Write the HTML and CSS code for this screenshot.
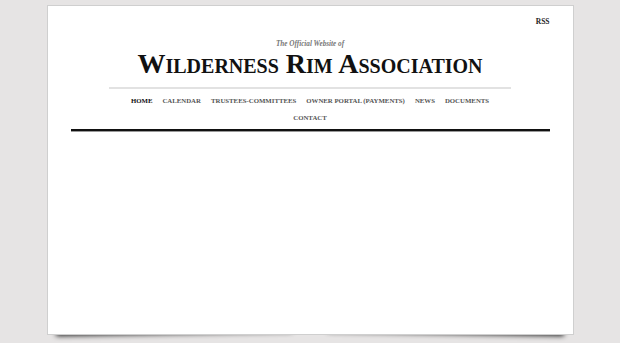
FILE: index.html
```html
<!DOCTYPE html>
<html>
<head>
<meta charset="utf-8">
<link rel="stylesheet" href="styles.css">
</head>
<body>
<div class="page">
  <div class="topbar"><a class="rss" href="#">RSS</a></div>
  <header class="header">
    <div class="tagline">The Official Website of</div>
    <h1 class="title">Wilderness Rim Association</h1>
    <div class="rule"></div>
    <nav class="nav">
      <a class="active" href="#">HOME</a>
      <a href="#">CALENDAR</a>
      <a href="#">TRUSTEES-COMMITTEES</a>
      <a href="#">OWNER PORTAL (PAYMENTS)</a>
      <a href="#">NEWS</a>
      <a href="#">DOCUMENTS</a>
      <a href="#">CONTACT</a>
    </nav>
  </header>
  <div class="darkrule"></div>
</div>
</body>
</html>
```
FILE: styles.css
```css
html, body { margin: 0; padding: 0; }
body {
  background: #e6e4e4;
  font-family: "Liberation Serif", "Times New Roman", serif;
  height: 343px;
  overflow: hidden;
}
.page {
  position: relative;
  margin: 5px auto 0;
  background: #fff;
  border: 1px solid #cfcfcf;
  padding: 0 23px;
  box-sizing: border-box;
  width: 527px;
  height: 330px;
}
.page::before, .page::after {
  content: "";
  position: absolute;
  z-index: -1;
  bottom: 6px;
  width: 45%;
  height: 12px;
  box-shadow: 0 6px 5px rgba(0,0,0,0.85);
}
.page::before { left: 8px; transform: rotate(-1deg); }
.page::after { right: 8px; transform: rotate(1deg); }
.topbar {
  display: flex;
  justify-content: flex-end;
  padding-top: 11px;
  height: 14px;
}
.rss {
  font-size: 7.5px;
  font-weight: bold;
  color: #222;
  text-decoration: none;
}
.header {
  display: flex;
  flex-direction: column;
  align-items: center;
}
.tagline {
  margin-top: 8px;
  font-size: 7.2px;
  font-style: italic;
  font-weight: bold;
  color: #777;
  line-height: 10px;
}
.title {
  margin: 0;
  font-size: 28px;
  font-weight: bold;
  font-variant: small-caps;
  color: #111;
  line-height: 30px;
}
.rule {
  width: 402px;
  height: 2px;
  background: #e2e2e2;
  margin-top: 8px;
}
.nav {
  display: flex;
  flex-wrap: wrap;
  justify-content: center;
  column-gap: 10px;
  width: 400px;
  margin-top: 3px;
  line-height: 17px;
}
.nav a {
  font-size: 6.8px;
  font-weight: bold;
  color: #555;
  text-decoration: none;
}
.nav a.active { color: #111; }
.darkrule {
  height: 2px;
  background: #111;
  border-bottom: 1px solid #999;
  margin-top: 3px;
}
```
